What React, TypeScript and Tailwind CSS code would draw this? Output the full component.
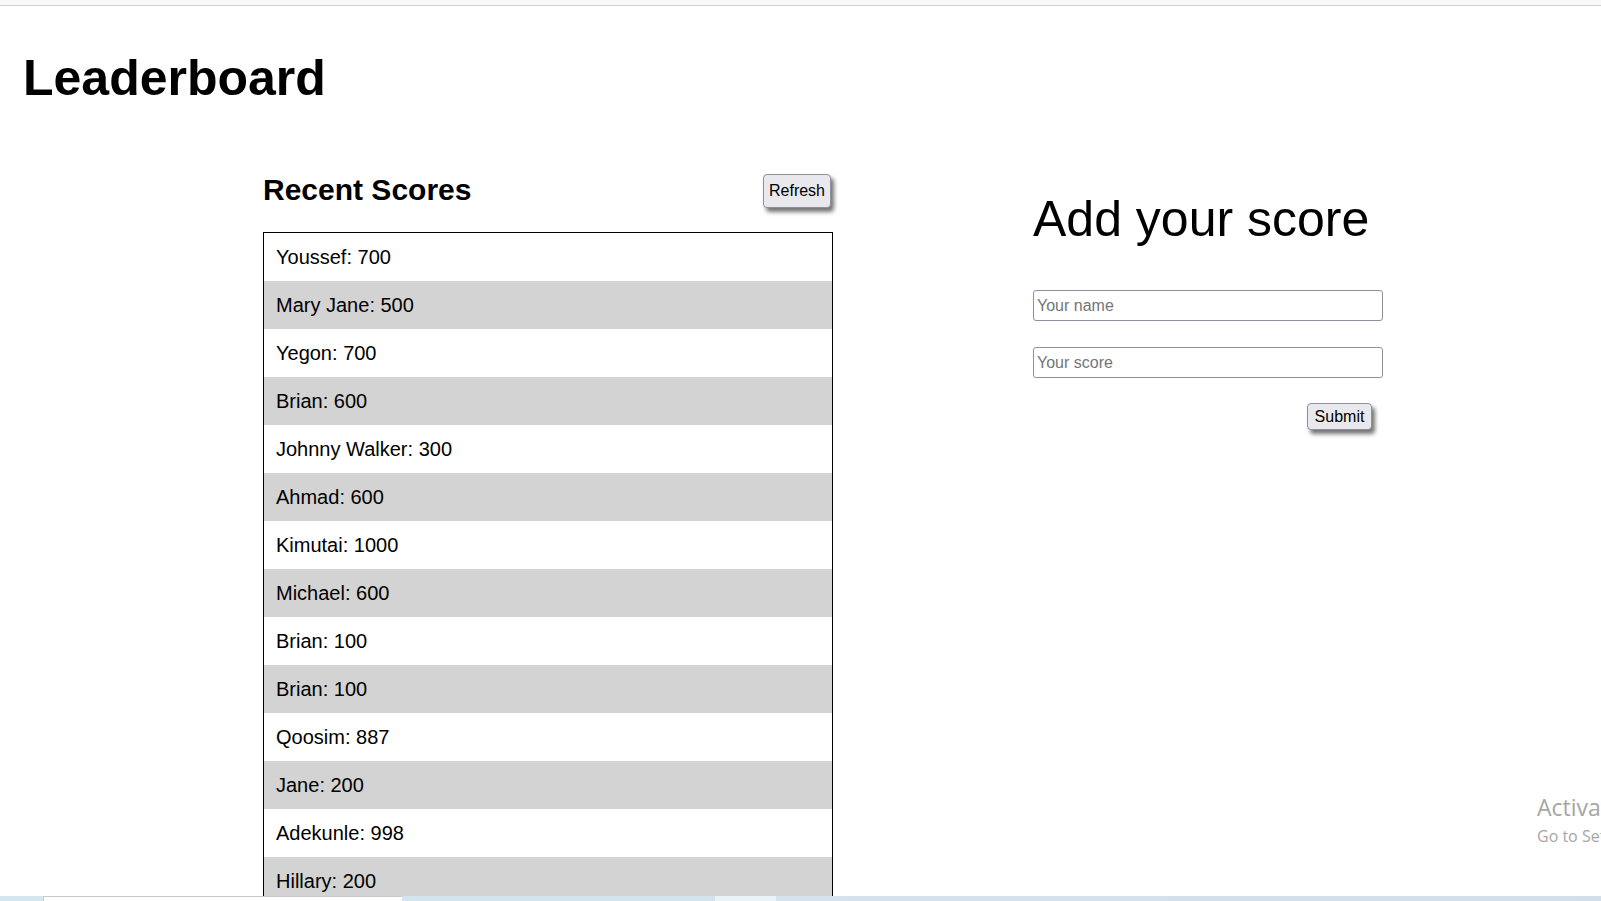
const scores: { name: string; score: number }[] = [
  { name: 'Youssef', score: 700 },
  { name: 'Mary Jane', score: 500 },
  { name: 'Yegon', score: 700 },
  { name: 'Brian', score: 600 },
  { name: 'Johnny Walker', score: 300 },
  { name: 'Ahmad', score: 600 },
  { name: 'Kimutai', score: 1000 },
  { name: 'Michael', score: 600 },
  { name: 'Brian', score: 100 },
  { name: 'Brian', score: 100 },
  { name: 'Qoosim', score: 887 },
  { name: 'Jane', score: 200 },
  { name: 'Adekunle', score: 998 },
  { name: 'Hillary', score: 200 },
  { name: 'Peter', score: 450 },
  { name: 'Amina', score: 320 },
];

const btn =
  'rounded-[4px] border border-[#8f8f9d] bg-[#e9e9ed] text-[16px] leading-none text-black shadow-[3px_4px_4px_rgba(0,0,0,0.55)]';

export default function App() {
  return (
    <div className="relative h-screen w-full overflow-hidden bg-white font-['Liberation_Sans',Arial,sans-serif] text-black">
      <div className="h-[6px] border-b border-[#d0d0d0] bg-[#f8f9fa]" />

      <h1 className="pl-[23px] pt-[47px] text-[50px] font-bold leading-none">Leaderboard</h1>

      <div className="mt-[71px] flex gap-[200px] pl-[263px]">
        <section className="w-[570px]">
          <div className="flex h-[34px] items-start justify-between">
            <h2 className="mt-px text-[30px] font-bold leading-none">Recent Scores</h2>
            <button className={`${btn} mr-[2px] h-[34px] w-[68px]`}>Refresh</button>
          </div>
          <ul className="mt-[24px] border border-black">
            {scores.map((s, i) => (
              <li
                key={i}
                className={`h-[48px] px-[12px] text-[20px] leading-[48px] ${i % 2 === 1 ? 'bg-[#d3d3d3]' : 'bg-white'}`}
              >
                {s.name}: {s.score}
              </li>
            ))}
          </ul>
        </section>

        <section className="w-[350px] pt-[20px]">
          <h1 className="text-[50px] font-normal leading-none">Add your score</h1>
          <form className="mt-[46px] flex flex-col">
            <input
              placeholder="Your name"
              className="h-[31px] w-[350px] rounded-[3px] border border-[#8f8f9d] px-[3px] text-[16px] placeholder:text-[#757575]"
            />
            <input
              placeholder="Your score"
              className="mt-[26px] h-[31px] w-[350px] rounded-[3px] border border-[#8f8f9d] px-[3px] text-[16px] placeholder:text-[#757575]"
            />
            <div className="mt-[25px] flex justify-end pr-[11px]">
              <button type="button" className={`${btn} h-[27px] w-[65px]`}>
                Submit
              </button>
            </div>
          </form>
        </section>
      </div>

      {/* windows watermark */}
      <div className="pointer-events-none absolute left-[1537px] top-[789px] whitespace-nowrap font-['Open_Sans',sans-serif] text-[#a6a6a6]">
        <div className="text-[23px] leading-[36px]">Activate Windows</div>
        <div className="text-[16px] leading-[22px]">Go to Settings to activate Windows.</div>
      </div>

      {/* taskbar edge */}
      <div className="absolute bottom-0 left-0 right-0 h-[5px] bg-gradient-to-r from-[#d4e7ee] to-[#d3deeb]">
        <div className="absolute left-[43px] top-0 h-[5px] w-[359px] border-l border-t border-[#c8c8c8] bg-white" />
        <div className="absolute left-[715px] top-0 h-[5px] w-[61px] bg-[#e9f2f6]" />
      </div>
    </div>
  );
}
